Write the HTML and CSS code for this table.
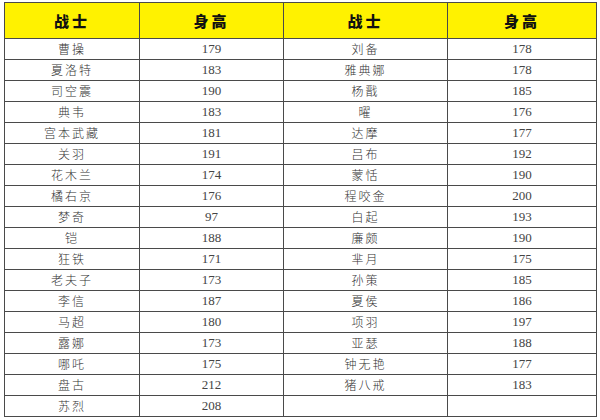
FILE: index.html
```html
<!DOCTYPE html>
<html lang="zh">
<head>
<meta charset="utf-8">
<link rel="stylesheet" href="styles.css">
</head>
<body>
<table class="grid">
  <colgroup>
    <col class="c1"><col class="c2"><col class="c3"><col class="c4">
  </colgroup>
  <thead>
    <tr><th>战士</th><th>身高</th><th>战士</th><th>身高</th></tr>
  </thead>
  <tbody>
    <tr><td class="name">曹操</td><td class="num">179</td><td class="name">刘备</td><td class="num">178</td></tr>
    <tr><td class="name">夏洛特</td><td class="num">183</td><td class="name">雅典娜</td><td class="num">178</td></tr>
    <tr><td class="name">司空震</td><td class="num">190</td><td class="name">杨戬</td><td class="num">185</td></tr>
    <tr><td class="name">典韦</td><td class="num">183</td><td class="name">曜</td><td class="num">176</td></tr>
    <tr><td class="name">宫本武藏</td><td class="num">181</td><td class="name">达摩</td><td class="num">177</td></tr>
    <tr><td class="name">关羽</td><td class="num">191</td><td class="name">吕布</td><td class="num">192</td></tr>
    <tr><td class="name">花木兰</td><td class="num">174</td><td class="name">蒙恬</td><td class="num">190</td></tr>
    <tr><td class="name">橘右京</td><td class="num">176</td><td class="name">程咬金</td><td class="num">200</td></tr>
    <tr><td class="name">梦奇</td><td class="num">97</td><td class="name">白起</td><td class="num">193</td></tr>
    <tr><td class="name">铠</td><td class="num">188</td><td class="name">廉颇</td><td class="num">190</td></tr>
    <tr><td class="name">狂铁</td><td class="num">171</td><td class="name">芈月</td><td class="num">175</td></tr>
    <tr><td class="name">老夫子</td><td class="num">173</td><td class="name">孙策</td><td class="num">185</td></tr>
    <tr><td class="name">李信</td><td class="num">187</td><td class="name">夏侯</td><td class="num">186</td></tr>
    <tr><td class="name">马超</td><td class="num">180</td><td class="name">项羽</td><td class="num">197</td></tr>
    <tr><td class="name">露娜</td><td class="num">173</td><td class="name">亚瑟</td><td class="num">188</td></tr>
    <tr><td class="name">哪吒</td><td class="num">175</td><td class="name">钟无艳</td><td class="num">177</td></tr>
    <tr><td class="name">盘古</td><td class="num">212</td><td class="name">猪八戒</td><td class="num">183</td></tr>
    <tr><td class="name">苏烈</td><td class="num">208</td><td class="name"></td><td class="num"></td></tr>
  </tbody>
</table>
</body>
</html>
```
FILE: styles.css
```css
html, body {
  margin: 0;
  padding: 0;
  background: #ffffff;
}

.grid {
  margin: 2px 0 0 4px;
  width: 592px;
  border-collapse: collapse;
  table-layout: fixed;
  font-family: "Noto Sans CJK SC", "Liberation Serif", serif;
}

.c1 { width: 135px; }
.c2 { width: 144px; }
.c3 { width: 164px; }
.c4 { width: 149px; }

.grid th,
.grid td {
  border: 1px solid #4a4a4a;
  padding: 0;
  text-align: center;
  vertical-align: middle;
}

.grid thead tr {
  height: 36px;
}

.grid th {
  background: #fff200;
  color: #111111;
  font-size: 15px;
  font-weight: 900;
  letter-spacing: 3px;
}

.grid tbody tr {
  height: 21px;
}

.name {
  font-family: "Noto Sans CJK SC", sans-serif;
  font-size: 12px;
  font-weight: 300;
  color: #333333;
  letter-spacing: 2px;
  line-height: 18px;
}

.num {
  font-family: "Liberation Serif", serif;
  font-size: 13px;
  color: #444444;
  line-height: 18px;
}
```
